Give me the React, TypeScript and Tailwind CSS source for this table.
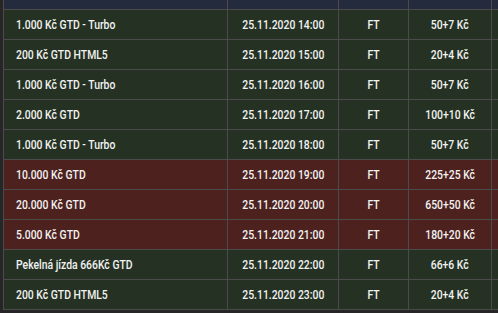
import React from 'react';

type Row = { name: string; date: string; type: string; price: string; hot?: boolean };

const rows: Row[] = [
  { name: '1.000 Kč GTD - Turbo', date: '25.11.2020 14:00', type: 'FT', price: '50+7 Kč' },
  { name: '200 Kč GTD HTML5', date: '25.11.2020 15:00', type: 'FT', price: '20+4 Kč' },
  { name: '1.000 Kč GTD - Turbo', date: '25.11.2020 16:00', type: 'FT', price: '50+7 Kč' },
  { name: '2.000 Kč GTD', date: '25.11.2020 17:00', type: 'FT', price: '100+10 Kč' },
  { name: '1.000 Kč GTD - Turbo', date: '25.11.2020 18:00', type: 'FT', price: '50+7 Kč' },
  { name: '10.000 Kč GTD', date: '25.11.2020 19:00', type: 'FT', price: '225+25 Kč', hot: true },
  { name: '20.000 Kč GTD', date: '25.11.2020 20:00', type: 'FT', price: '650+50 Kč', hot: true },
  { name: '5.000 Kč GTD', date: '25.11.2020 21:00', type: 'FT', price: '180+20 Kč', hot: true },
  { name: 'Pekelná jízda 666Kč GTD', date: '25.11.2020 22:00', type: 'FT', price: '66+6 Kč' },
  { name: '200 Kč GTD HTML5', date: '25.11.2020 23:00', type: 'FT', price: '20+4 Kč' },
];

const cols = 'grid grid-cols-[224px_111px_70px_83px_1px]';

export default function App() {
  return (
    <div className="w-[498px] h-[313px] overflow-hidden bg-[#262626] pl-[3px] font-['Roboto',sans-serif] text-[13px] font-medium text-[#f2f2f2]">
      <div className={`${cols} h-[10px] border-b border-[#4b4b4b] bg-[#232b3d]`}>
        <div className="border-l border-[#4b4b4b]" />
        <div className="border-l border-[#4b4b4b]" />
        <div className="border-l border-[#4b4b4b]" />
        <div className="border-l border-[#4b4b4b]" />
        <div className="bg-[#4b4b4b]" />
      </div>
      {rows.map((r, i) => (
        <div
          key={i}
          className={`${cols} h-[30px] border-b border-[#4b4b4b] ${r.hot ? 'bg-[#4d211e]' : 'bg-[#253223]'}`}
        >
          <div className="flex items-center border-l border-[#4b4b4b] pl-[12px]">
            <span className="inline-block origin-left scale-x-[0.8] whitespace-nowrap">{r.name}</span>
          </div>
          <div className="flex items-center justify-center border-l border-[#4b4b4b]">
            <span className="inline-block scale-x-[0.8] whitespace-nowrap">{r.date}</span>
          </div>
          <div className="flex items-center justify-center border-l border-[#4b4b4b]">
            <span className="inline-block scale-x-[0.8]">{r.type}</span>
          </div>
          <div className="flex items-center justify-center border-l border-[#4b4b4b]">
            <span className="inline-block scale-x-[0.8] whitespace-nowrap">{r.price}</span>
          </div>
          <div className="bg-[#4b4b4b]" />
        </div>
      ))}
    </div>
  );
}
